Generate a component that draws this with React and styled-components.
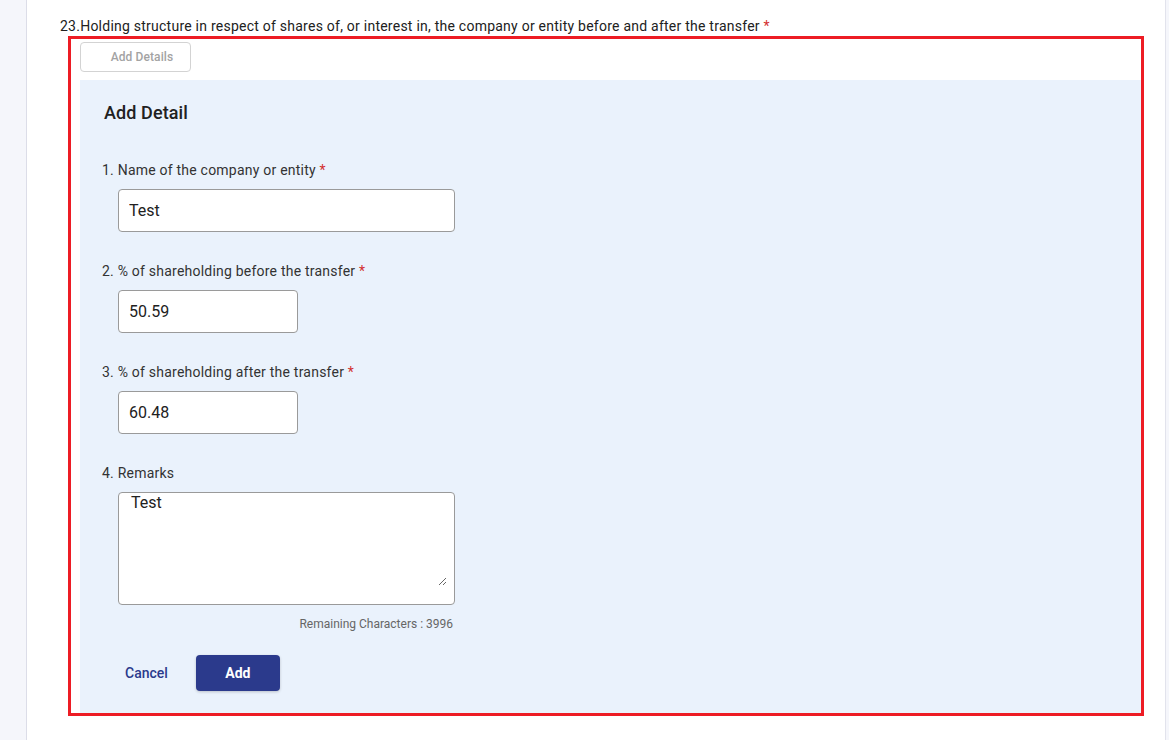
import styled, { createGlobalStyle } from "styled-components";

const GlobalStyle = createGlobalStyle`
  html, body {
    margin: 0;
    padding: 0;
    background: #f5f6fb;
    font-family: Roboto, "Liberation Sans", Arial, sans-serif;
    color: #212121;
  }
  * { box-sizing: border-box; }
`;

const Shell = styled.div`
  display: flex;
  min-height: 100vh;
  padding-right: 3px;
`;

const Rail = styled.div`
  width: 27px;
  flex-shrink: 0;
  border-right: 1px solid #dcdde8;
`;

const Main = styled.main`
  flex: 1;
  background: #fff;
  border-right: 1px solid #e2e3ec;
  padding: 16px 21px 24px 33px;
`;

const Question = styled.div`
  font-size: 14px;
  line-height: 20px;
  letter-spacing: 0.24px;
  color: #212121;
`;

const Req = styled.span`
  color: #d32f2f;
`;

const Highlight = styled.section`
  margin-left: 8px;
  border: 3px solid #ed1c24;
  padding: 3px 0 0 9px;
`;

const GhostButton = styled.button`
  display: block;
  width: 111px;
  height: 30px;
  border: 1px solid #d3d3d3;
  border-radius: 4px;
  background: #fff;
  color: #a3a3a3;
  font-family: inherit;
  font-size: 12px;
  font-weight: 500;
  letter-spacing: 0.1px;
  padding: 0 0 0 13px;
`;

const Panel = styled.div`
  margin-top: 8px;
  background: #eaf2fc;
  padding: 21px 0 22px 22px;
`;

const PanelTitle = styled.h2`
  margin: 0 0 35px 2px;
  font-size: 18px;
  line-height: 24px;
  font-weight: 500;
  letter-spacing: 0.1px;
  color: #212121;
`;

const Field = styled.div`
  margin-bottom: 29px;
`;

const Label = styled.label`
  display: block;
  font-size: 14px;
  line-height: 20px;
  letter-spacing: 0.22px;
  color: #333;
  margin-bottom: 9px;
`;

const TextInput = styled.input`
  display: block;
  margin-left: 16px;
  width: ${(p) => p.$w}px;
  height: 43px;
  border: 1px solid #9a9a9a;
  border-radius: 4px;
  background: #fff;
  padding: 0 10px;
  font-family: inherit;
  font-size: 16px;
  color: #212121;
  outline: none;
`;

const RemarksBox = styled.div`
  margin-left: 16px;
  width: 337px;
  height: 113px;
  border: 1px solid #9a9a9a;
  border-radius: 4px;
  background: #fff;
  padding: 0 7px 18px 0;
`;

const Remarks = styled.textarea`
  display: block;
  width: 100%;
  height: 93px;
  border: none;
  background: transparent;
  padding: 0 12px;
  font-family: inherit;
  font-size: 16px;
  line-height: 20px;
  color: #212121;
  outline: none;
  resize: vertical;
`;

const Counter = styled.div`
  margin: 11px 0 0 16px;
  width: 337px;
  padding-right: 2px;
  text-align: right;
  font-size: 12px;
  line-height: 16px;
  color: #666;
`;

const Actions = styled.div`
  display: flex;
  align-items: center;
  gap: 21px;
  margin: 23px 0 0 16px;
`;

const LinkButton = styled.button`
  border: none;
  background: none;
  padding: 0 7px;
  font-family: inherit;
  font-size: 14px;
  font-weight: 500;
  color: #2b3a8c;
`;

const PrimaryButton = styled.button`
  width: 84px;
  height: 36px;
  border: none;
  border-radius: 4px;
  background: #2b3a8c;
  box-shadow: 0 1px 3px rgba(0, 0, 0, 0.2);
  color: #fff;
  font-family: inherit;
  font-size: 14px;
  font-weight: 700;
`;

const fields = [
  { label: "1. Name of the company or entity", value: "Test", w: 337 },
  { label: "2. % of shareholding before the transfer", value: "50.59", w: 180 },
  { label: "3. % of shareholding after the transfer", value: "60.48", w: 180 },
];

export default function App() {
  return (
    <>
      <GlobalStyle />
      <Shell>
        <Rail />
        <Main>
          <Question>
            23.Holding structure in respect of shares of, or interest in, the company or entity before and after the transfer <Req>*</Req>
          </Question>
          <Highlight>
            <GhostButton disabled>Add Details</GhostButton>
            <Panel>
              <PanelTitle>Add Detail</PanelTitle>
              {fields.map((f) => (
                <Field key={f.label}>
                  <Label>
                    {f.label} <Req>*</Req>
                  </Label>
                  <TextInput $w={f.w} defaultValue={f.value} />
                </Field>
              ))}
              <Label>4. Remarks</Label>
              <RemarksBox>
                <Remarks defaultValue="Test" />
              </RemarksBox>
              <Counter>Remaining Characters : 3996</Counter>
              <Actions>
                <LinkButton>Cancel</LinkButton>
                <PrimaryButton>Add</PrimaryButton>
              </Actions>
            </Panel>
          </Highlight>
        </Main>
      </Shell>
    </>
  );
}
